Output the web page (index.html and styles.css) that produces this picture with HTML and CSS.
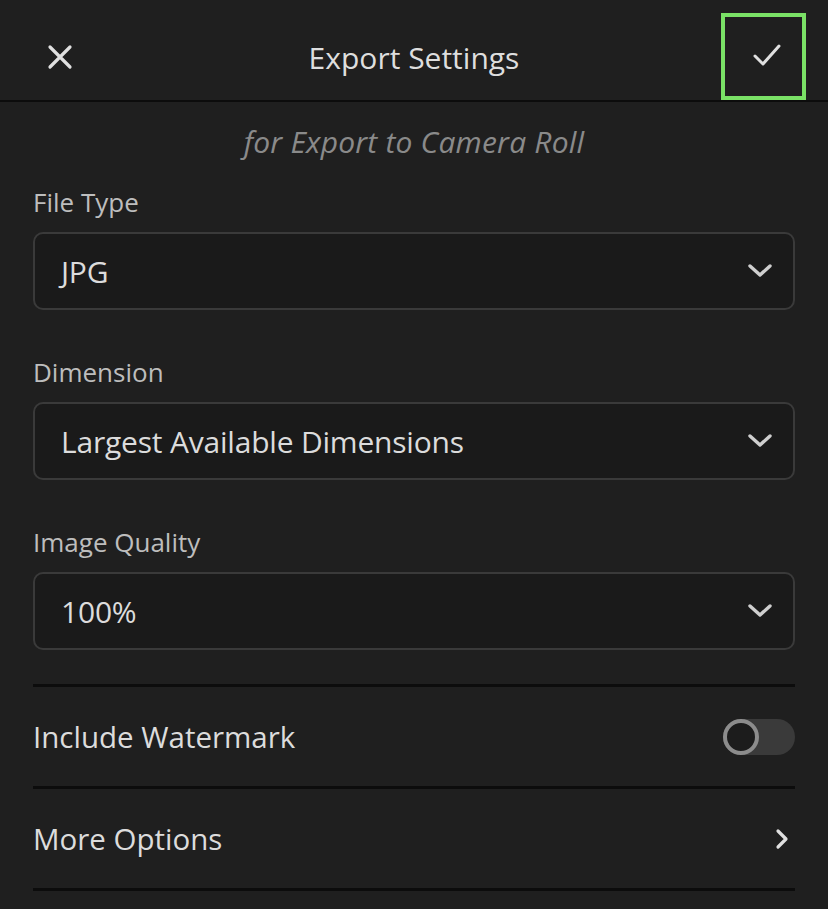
FILE: index.html
```html
<!DOCTYPE html>
<html lang="en">
<head>
  <meta charset="UTF-8" />
  <meta name="viewport" content="width=device-width, initial-scale=1.0"/>
  <title>Export Settings</title>
  <link rel="stylesheet" href="styles.css">
</head>
<body>
  <header class="topbar">
    <button class="icon-btn close-btn" aria-label="Close">
      <svg width="26" height="26" viewBox="0 0 26 26"><path d="M3 3 L23 23 M23 3 L3 23" stroke="#e0e0e0" stroke-width="3.2" stroke-linecap="round"/></svg>
    </button>
    <h1>Export Settings</h1>
    <button class="icon-btn confirm-btn" aria-label="Done">
      <svg width="28" height="24" viewBox="0 0 28 24"><path d="M2 13 L10 21 L26 3" fill="none" stroke="#e0e0e0" stroke-width="3" stroke-linecap="round" stroke-linejoin="round"/></svg>
    </button>
  </header>

  <main class="content">
    <p class="subtitle">for Export to Camera Roll</p>

    <div class="field">
      <label class="field-label">File Type</label>
      <div class="select">
        <span>JPG</span>
        <svg class="chev" width="26" height="16" viewBox="0 0 26 16"><path d="M3 3 L13 12 L23 3" fill="none" stroke="#cfcfcf" stroke-width="3.4" stroke-linecap="round" stroke-linejoin="round"/></svg>
      </div>
    </div>

    <div class="field">
      <label class="field-label">Dimension</label>
      <div class="select">
        <span>Largest Available Dimensions</span>
        <svg class="chev" width="26" height="16" viewBox="0 0 26 16"><path d="M3 3 L13 12 L23 3" fill="none" stroke="#cfcfcf" stroke-width="3.4" stroke-linecap="round" stroke-linejoin="round"/></svg>
      </div>
    </div>

    <div class="field">
      <label class="field-label">Image Quality</label>
      <div class="select">
        <span>100%</span>
        <svg class="chev" width="26" height="16" viewBox="0 0 26 16"><path d="M3 3 L13 12 L23 3" fill="none" stroke="#cfcfcf" stroke-width="3.4" stroke-linecap="round" stroke-linejoin="round"/></svg>
      </div>
    </div>

    <div class="rows">
      <div class="row">
        <span>Include Watermark</span>
        <div class="toggle"><div class="knob"></div></div>
      </div>
      <div class="row">
        <span>More Options</span>
        <svg width="14" height="22" viewBox="0 0 14 22"><path d="M3 3 L11 11 L3 19" fill="none" stroke="#e0e0e0" stroke-width="3.2" stroke-linecap="round" stroke-linejoin="round"/></svg>
      </div>
    </div>
  </main>
</body>
</html>
```

FILE: styles.css
```css
body {
  margin: 0;
  font-family: 'Open Sans', 'Noto Sans', sans-serif;
  background-color: #1f1f1f;
  color: #dcdcdc;
  width: 828px;
  height: 909px;
  overflow: hidden;
}

.topbar {
  height: 102px;
  border-bottom: 2px solid #0c0c0c;
  display: flex;
  align-items: center;
  justify-content: space-between;
  padding: 0 22px 0 34px;
  box-sizing: border-box;
  position: relative;
}

.topbar h1 {
  margin: 0;
  font-size: 30px;
  font-weight: 400;
  color: #dedede;
  letter-spacing: 0;
  position: absolute;
  left: 0;
  right: 0;
  text-align: center;
  pointer-events: none;
  top: 38px;
  line-height: 40px;
}

.icon-btn {
  background: none;
  border: none;
  padding: 0;
  display: flex;
  align-items: center;
  justify-content: center;
  cursor: pointer;
}

.close-btn {
  width: 52px;
  height: 52px;
  margin-top: 14px;
}

.confirm-btn {
  width: 85px;
  height: 87px;
  border: 4px solid #7ae166;
  box-sizing: border-box;
  margin-top: 12px;
  padding-left: 7px;
  padding-bottom: 2px;
}

.content {
  padding: 0 33px;
}

.subtitle {
  margin: 20px 0 0;
  text-align: center;
  font-style: italic;
  font-size: 30px;
  line-height: 40px;
  color: #8a8a8a;
  letter-spacing: 0.2px;
}

.field {
  margin-top: 23px;
}

.field + .field {
  margin-top: 45px;
}

.field-label {
  display: block;
  font-size: 26px;
  line-height: 34px;
  color: #bdbdbd;
  letter-spacing: 0;
}

.select {
  margin-top: 13px;
  height: 78px;
  box-sizing: border-box;
  border: 2px solid #3a3a3a;
  border-radius: 10px;
  background-color: #1a1a1a;
  display: flex;
  align-items: center;
  justify-content: space-between;
  padding: 0 20px 0 26px;
  font-size: 30px;
  color: #dcdcdc;
  letter-spacing: -0.2px;
}

.rows {
  margin-top: 34px;
  border-top: 3px solid #0c0c0c;
}

.row {
  height: 99px;
  border-bottom: 3px solid #0c0c0c;
  display: flex;
  align-items: center;
  justify-content: space-between;
  font-size: 29.5px;
  color: #dcdcdc;
  letter-spacing: 0;
  padding-right: 6px;
}

.row:first-child {
  padding-right: 0;
}

.toggle {
  width: 72px;
  height: 36px;
  border-radius: 18px;
  background-color: #3a3a3a;
  position: relative;
}

.knob {
  position: absolute;
  left: 0;
  top: 0;
  width: 36px;
  height: 36px;
  box-sizing: border-box;
  border-radius: 50%;
  border: 4px solid #8c8c8c;
  background-color: #1c1c1c;
}
```
